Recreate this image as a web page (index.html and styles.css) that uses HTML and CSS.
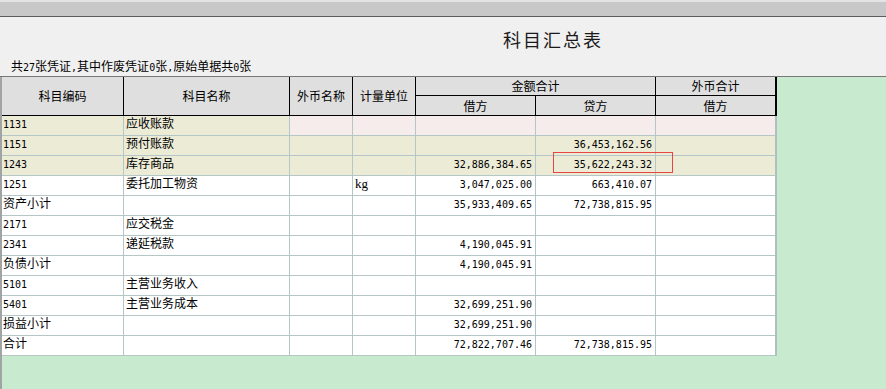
FILE: index.html
```html
<!DOCTYPE html>
<html lang="zh-CN">
<head>
<meta charset="utf-8">
<title>科目汇总表</title>
<link rel="stylesheet" href="styles.css">
</head>
<body>
<div class="topbar"></div>
<div class="head">
  <div class="title">科目汇总表</div>
  <div class="sub">共<span class="n">27</span>张凭证<span class="n">,</span>其中作废凭证<span class="n">0</span>张<span class="n">,</span>原始单据共<span class="n">0</span>张</div>
</div>
<div class="panel">
  <div class="grid">
    <div class="h span2">科目编码</div>
    <div class="h span2">科目名称</div>
    <div class="h span2">外币名称</div>
    <div class="h span2">计量单位</div>
    <div class="h wide">金额合计</div>
    <div class="h last">外币合计</div>
    <div class="h">借方</div>
    <div class="h">贷方</div>
    <div class="h last">借方</div>

    <div class="row mixed">
      <div class="c first"><span class="n">1131</span></div><div class="c">应收账款</div><div class="c"></div><div class="c"></div><div class="c r"></div><div class="c r"></div><div class="c last"></div>
    </div>
    <div class="row beige">
      <div class="c first"><span class="n">1151</span></div><div class="c">预付账款</div><div class="c"></div><div class="c"></div><div class="c r"></div><div class="c r"><span class="n">36,453,162.56</span></div><div class="c last"></div>
    </div>
    <div class="row beige">
      <div class="c first"><span class="n">1243</span></div><div class="c">库存商品</div><div class="c"></div><div class="c"></div><div class="c r"><span class="n">32,886,384.65</span></div><div class="c r"><span class="n">35,622,243.32</span></div><div class="c last"></div>
    </div>
    <div class="row">
      <div class="c first"><span class="n">1251</span></div><div class="c">委托加工物资</div><div class="c"></div><div class="c"><span class="unit">kg</span></div><div class="c r"><span class="n">3,047,025.00</span></div><div class="c r"><span class="n">663,410.07</span></div><div class="c last"></div>
    </div>
    <div class="row">
      <div class="c first">资产小计</div><div class="c"></div><div class="c"></div><div class="c"></div><div class="c r"><span class="n">35,933,409.65</span></div><div class="c r"><span class="n">72,738,815.95</span></div><div class="c last"></div>
    </div>
    <div class="row">
      <div class="c first"><span class="n">2171</span></div><div class="c">应交税金</div><div class="c"></div><div class="c"></div><div class="c r"></div><div class="c r"></div><div class="c last"></div>
    </div>
    <div class="row">
      <div class="c first"><span class="n">2341</span></div><div class="c">递延税款</div><div class="c"></div><div class="c"></div><div class="c r"><span class="n">4,190,045.91</span></div><div class="c r"></div><div class="c last"></div>
    </div>
    <div class="row">
      <div class="c first">负债小计</div><div class="c"></div><div class="c"></div><div class="c"></div><div class="c r"><span class="n">4,190,045.91</span></div><div class="c r"></div><div class="c last"></div>
    </div>
    <div class="row">
      <div class="c first"><span class="n">5101</span></div><div class="c">主营业务收入</div><div class="c"></div><div class="c"></div><div class="c r"></div><div class="c r"></div><div class="c last"></div>
    </div>
    <div class="row">
      <div class="c first"><span class="n">5401</span></div><div class="c">主营业务成本</div><div class="c"></div><div class="c"></div><div class="c r"><span class="n">32,699,251.90</span></div><div class="c r"></div><div class="c last"></div>
    </div>
    <div class="row">
      <div class="c first">损益小计</div><div class="c"></div><div class="c"></div><div class="c"></div><div class="c r"><span class="n">32,699,251.90</span></div><div class="c r"></div><div class="c last"></div>
    </div>
    <div class="row">
      <div class="c first">合计</div><div class="c"></div><div class="c"></div><div class="c"></div><div class="c r"><span class="n">72,822,707.46</span></div><div class="c r"><span class="n">72,738,815.95</span></div><div class="c last"></div>
    </div>

    <div class="mark"></div>
  </div>
</div>
</body>
</html>
```

FILE: styles.css
```css
* {
  box-sizing: border-box;
}

html,
body {
  margin: 0;
  height: 100%;
}

body {
  display: flex;
  flex-direction: column;
  background: #f0f0f0;
  color: #000;
  font-family: "Noto Sans CJK SC", "Noto Sans", sans-serif;
  font-size: 12px;
}

.topbar {
  height: 17px;
  flex: none;
  background: #c8c8c8;
  border-top: 2px solid #e4e4e4;
  border-bottom: 1px solid #5c5c5c;
}

.head {
  height: 60px;
  flex: none;
  padding-top: 10px;
  border-bottom: 1px solid #787878;
}

.title {
  padding-left: 220px;
  text-align: center;
  font-size: 18px;
  line-height: 24px;
  letter-spacing: 2px;
  color: #1a1a1a;
}

.sub {
  margin-top: 7px;
  padding-left: 11px;
  line-height: 16px;
}

.n {
  font-family: "DejaVu Sans Mono", "Liberation Mono", monospace;
  font-size: 10px;
}

.unit {
  font-family: "Liberation Serif", serif;
  font-size: 13px;
}

.panel {
  flex: 1;
  background: #c8ebcf;
  border-left: 2px solid #a0a4a4;
}

.grid {
  position: relative;
  display: grid;
  grid-template-columns: 122px 166px 63px 63px 120px 120px 121px;
  grid-template-rows: 19px 20px repeat(12, 20px);
  width: 775px;
}

.h {
  display: flex;
  align-items: center;
  justify-content: center;
  background: #dfdfdf;
  border-right: 1px solid #000;
  border-bottom: 1px solid #000;
  line-height: 14px;
}

.h.span2 {
  grid-row: span 2;
}

.h.wide {
  grid-column: span 2;
}

.h.last {
  border-right-width: 2px;
}

.row {
  display: contents;
}

.c {
  background: #fff;
  border-right: 1px solid #b4c6c6;
  border-bottom: 1px solid #b4c6c6;
  padding-left: 2px;
  line-height: 13px;
  white-space: nowrap;
}

.c.first {
  padding-left: 1px;
}

.c.r {
  text-align: right;
  padding-right: 3px;
}

.c.last {
  border-right: 2px solid #b0c0c0;
}

.row.beige .c {
  background: #ecebd6;
}

.row.mixed .c {
  background: #f6ecec;
}

.row.mixed .c:nth-child(-n+2) {
  background: #ecebd6;
}

.mark {
  position: absolute;
  left: 551px;
  top: 75px;
  width: 120px;
  height: 21px;
  border: 1px solid #e84444;
}
```
